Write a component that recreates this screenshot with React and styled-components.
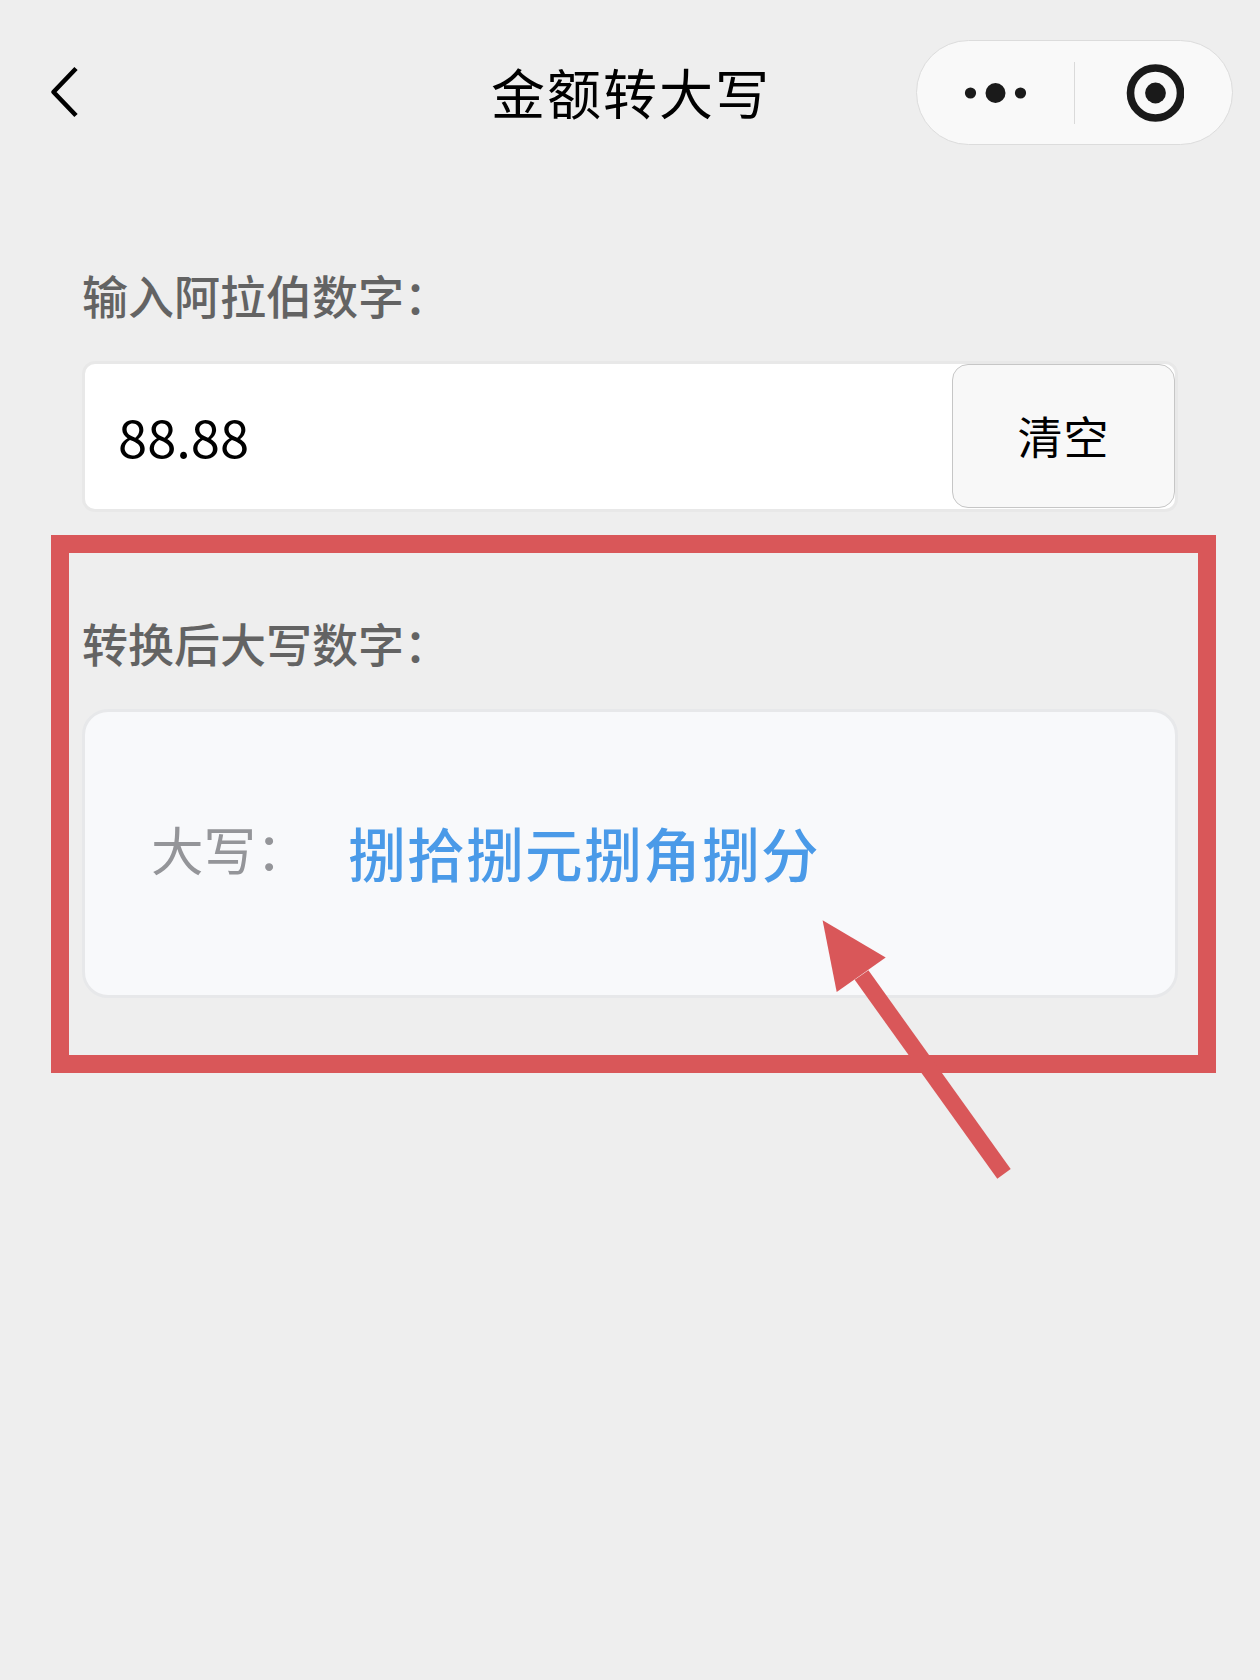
import React from "react";
import styled, { createGlobalStyle } from "styled-components";

const GlobalStyle = createGlobalStyle`
  * { box-sizing: border-box; }
  body { margin: 0; background: #eeeeee; }
`;

const Page = styled.div`
  display: flow-root;
  width: 1260px;
  height: 1680px;
  overflow: hidden;
  background: #eeeeee;
  color: #000;
  font-family: "Noto Sans CJK SC", sans-serif;
`;

const NavBar = styled.header`
  display: grid;
  grid-template-columns: 1fr auto 1fr;
  align-items: center;
  height: 105px;
  margin-top: 40px;
  padding: 0 27px 0 48px;
`;

const BackButton = styled.button`
  display: flex;
  justify-self: start;
  margin-bottom: 2px;
  padding: 0;
  border: 0;
  background: none;
`;

const Title = styled.h1`
  margin: 0 19px 2px 0;
  font-size: 54px;
  font-weight: 400;
  line-height: 80px;
  letter-spacing: 2px;
`;

const Capsule = styled.div`
  display: flex;
  align-items: center;
  justify-self: end;
  width: 317px;
  height: 105px;
  border: 1px solid #dcdcdc;
  border-radius: 53px;
  background: #f9f9f9;
`;

const CapsuleHalf = styled.div`
  display: flex;
  flex: 1;
  justify-content: center;
`;

const Divider = styled.div`
  width: 1px;
  height: 62px;
  background: #dadada;
`;

const Label = styled.div`
  font-size: 46px;
  font-weight: 500;
  line-height: 60px;
  color: #636363;
  white-space: nowrap;
`;

const InputSection = styled.section`
  padding: 119px 82px 0;
`;

const InputRow = styled.div`
  display: flex;
  width: 1096px;
  height: 151px;
  margin-top: 37px;
  border: 3px solid #e8e8e8;
  border-radius: 13px;
  background: #fff;
`;

const AmountInput = styled.div`
  flex: 1;
  padding-left: 33px;
  font-size: 52.5px;
  line-height: 142px;
`;

const ClearButton = styled.button`
  width: 223px;
  height: 144px;
  padding: 0;
  border: 1px solid #c6c6c6;
  border-radius: 16px;
  background: #f8f8f8;
  color: #000;
  font-family: inherit;
  font-size: 45px;
  line-height: 60px;
  letter-spacing: 1px;
`;

const Highlight = styled.section`
  position: relative;
  width: 1165px;
  height: 538px;
  margin: 23px 0 0 51px;
  padding: 59px 13px 0;
  border: 18px solid #d95759;
`;

const ResultCard = styled.div`
  display: flex;
  align-items: center;
  width: 1096px;
  height: 289px;
  margin-top: 37px;
  padding-left: 66px;
  border: 3px solid #e7e8ea;
  border-radius: 26px;
  background: #f8f9fb;
`;

const ResultKey = styled.span`
  width: 197px;
  margin-top: -11px;
  font-size: 52.5px;
  line-height: 80px;
  color: #949599;
`;

const ResultValue = styled.span`
  margin-top: -4px;
  font-size: 57.5px;
  font-weight: 500;
  line-height: 80px;
  letter-spacing: 1.5px;
  color: #4a9ae8;
  white-space: nowrap;
`;

const Arrow = styled.svg`
  position: absolute;
  left: 751px;
  top: 365px;
`;

export default function App() {
  return (
    <Page>
      <GlobalStyle />
      <NavBar>
        <BackButton aria-label="返回">
          <svg width="32" height="54" viewBox="0 0 32 54" fill="none">
            <path
              d="M28 3.5 5.5 27 28 50.5"
              stroke="#000"
              strokeWidth="4.6"
              strokeLinejoin="round"
            />
          </svg>
        </BackButton>
        <Title>金额转大写</Title>
        <Capsule>
          <CapsuleHalf>
            <svg width="64" height="22" viewBox="0 0 64 22" fill="#1a1a1a">
              <circle cx="6.5" cy="11" r="5.6" />
              <circle cx="31.5" cy="11" r="10" />
              <circle cx="56.5" cy="11" r="5.6" />
            </svg>
          </CapsuleHalf>
          <Divider />
          <CapsuleHalf>
            <svg width="60" height="60" viewBox="0 0 60 60" fill="none">
              <circle cx="31.5" cy="30" r="25" stroke="#1a1a1a" strokeWidth="7.6" />
              <circle cx="31.5" cy="30" r="10.4" fill="#1a1a1a" />
            </svg>
          </CapsuleHalf>
        </Capsule>
      </NavBar>
      <InputSection>
        <Label>输入阿拉伯数字：</Label>
        <InputRow>
          <AmountInput>88.88</AmountInput>
          <ClearButton>清空</ClearButton>
        </InputRow>
      </InputSection>
      <Highlight>
        <Label>转换后大写数字：</Label>
        <ResultCard>
          <ResultKey>大写：</ResultKey>
          <ResultValue>捌拾捌元捌角捌分</ResultValue>
        </ResultCard>
        <Arrow width="194" height="264" viewBox="820 918 194 264" fill="#d95759">
          <path d="M822.6 920.3 885.7 957.4 836.7 992Z" />
          <path d="M868.4 970.3 1010.7 1169 997.3 1178.8 854.7 979.8Z" />
        </Arrow>
      </Highlight>
    </Page>
  );
}
